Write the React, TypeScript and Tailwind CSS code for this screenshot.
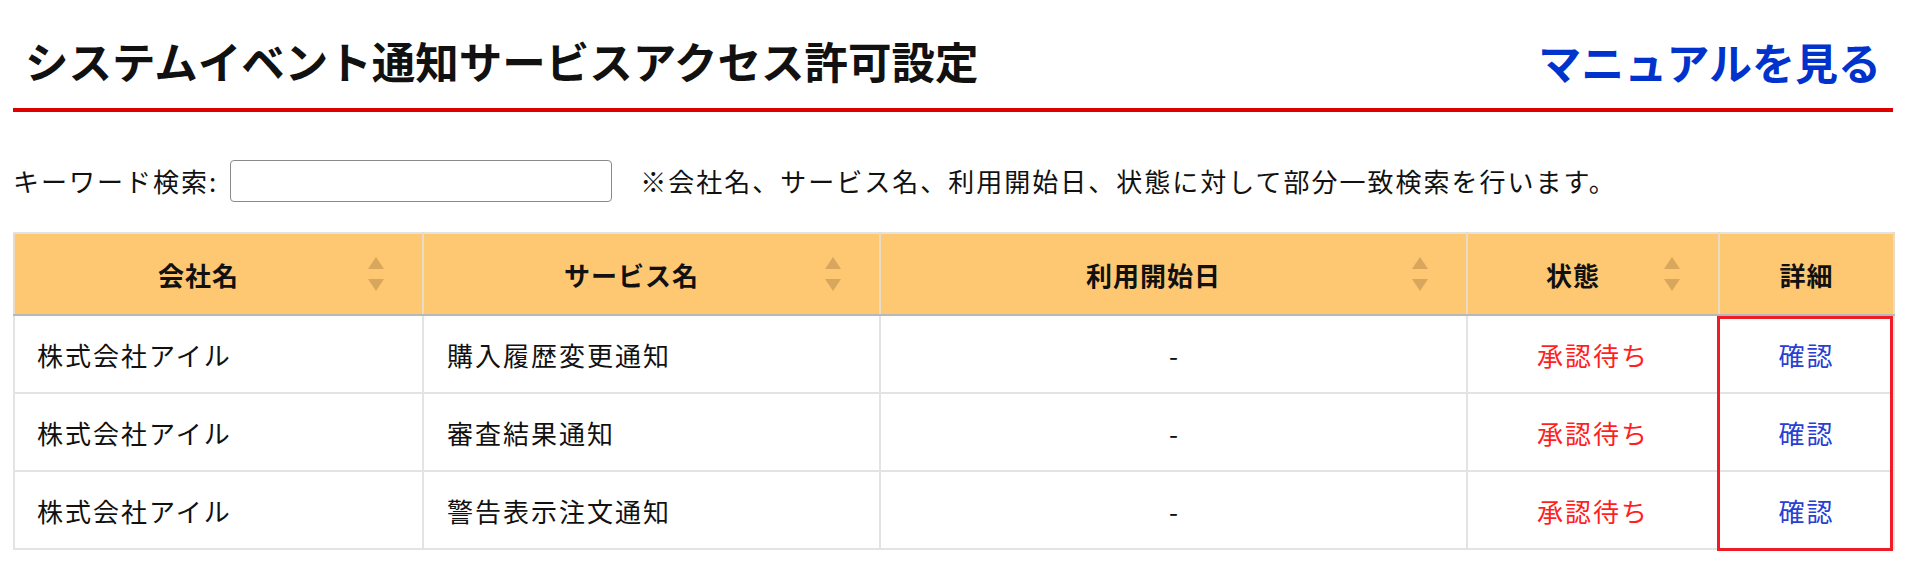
import * as React from "react";

const rows = [
  { company: "株式会社アイル", service: "購入履歴変更通知", start: "-", status: "承認待ち" },
  { company: "株式会社アイル", service: "審査結果通知", start: "-", status: "承認待ち" },
  { company: "株式会社アイル", service: "警告表示注文通知", start: "-", status: "承認待ち" },
];

function SortIcon() {
  return (
    <svg
      width="16"
      height="34"
      viewBox="0 0 16 34"
      className="absolute right-[38px] top-1/2 -translate-y-1/2"
    >
      <polygon points="8,0 16,12 0,12" fill="#d9a65e" />
      <polygon points="0,22 16,22 8,34" fill="#d9a65e" />
    </svg>
  );
}

function Th({ children, sortable = true }: { children: React.ReactNode; sortable?: boolean }) {
  return (
    <th
      className={
        "relative h-[82px] border-x-2 border-t-2 border-b-2 border-x-[#eadcc4] border-t-[#e3e3e3] border-b-[#b8b8b8] bg-[#fec771] text-center text-[26px] font-bold tracking-[1px] text-[#111] " +
        (sortable ? "pl-[12px] pr-[52px]" : "px-2")
      }
    >
      {children}
      {sortable && <SortIcon />}
    </th>
  );
}

export default function App() {
  return (
    <div
      className="h-[564px] w-[1914px] overflow-hidden bg-white pl-[13px] pr-[21px] text-[#111]"
      style={{ fontFamily: '"Noto Sans CJK JP", "Noto Sans", sans-serif' }}
    >
      {/* Title bar */}
      <div className="flex h-[108px] items-start justify-between pl-[12px] pr-[12px] pt-[39px]">
        <h1 className="text-[43.5px] font-bold leading-[44px] text-[#111]">
          システムイベント通知サービスアクセス許可設定
        </h1>
        <a className="text-[43px] font-bold leading-[44px] text-[#0033cc]">マニュアルを見る</a>
      </div>
      <div className="h-[4px] bg-[#dd0000]" />

      {/* Keyword search */}
      <div className="mt-[48px] flex h-[42px] items-center">
        <label className="text-[26px] leading-none tracking-[2px]">キーワード検索:</label>
        <input
          type="text"
          className="ml-[12px] h-[42px] w-[382px] rounded-[4px] border-[1.5px] border-[#8a8a8a] bg-white px-2 text-[22px] outline-none"
        />
        <span className="ml-[28px] text-[26px] leading-none tracking-[2px]">
          ※会社名、サービス名、利用開始日、状態に対して部分一致検索を行います。
        </span>
      </div>

      {/* Table */}
      <div className="relative mt-[30px]">
        <table className="w-full table-fixed border-collapse">
          <colgroup>
            <col className="w-[409px]" />
            <col className="w-[457px]" />
            <col className="w-[587px]" />
            <col className="w-[252px]" />
            <col className="w-[175px]" />
          </colgroup>
          <thead>
            <tr>
              <Th>会社名</Th>
              <Th>サービス名</Th>
              <Th>利用開始日</Th>
              <Th>状態</Th>
              <Th sortable={false}>詳細</Th>
            </tr>
          </thead>
          <tbody>
            {rows.map((r, i) => (
              <tr key={i} className="h-[78px]">
                <td className="border-2 border-[#e3e3e3] pl-[22px] text-[26px] tracking-[2px]">{r.company}</td>
                <td className="border-2 border-[#e3e3e3] pl-[23px] text-[26px] tracking-[2px]">{r.service}</td>
                <td className="border-2 border-[#e3e3e3] text-center text-[26px]">{r.start}</td>
                <td className="border-2 border-[#e3e3e3] text-center text-[26px] tracking-[2px] text-[#ff1f1f]">
                  {r.status}
                </td>
                <td className="border-2 border-[#e3e3e3] text-center text-[26px] tracking-[2px]">
                  <a className="text-[#2a3fd2]">確認</a>
                </td>
              </tr>
            ))}
          </tbody>
        </table>

        {/* highlight around detail column */}
        <div className="pointer-events-none absolute left-[1704px] top-[84px] h-[235px] w-[176px] border-[3px] border-[#ee1c25]" />
      </div>
    </div>
  );
}
